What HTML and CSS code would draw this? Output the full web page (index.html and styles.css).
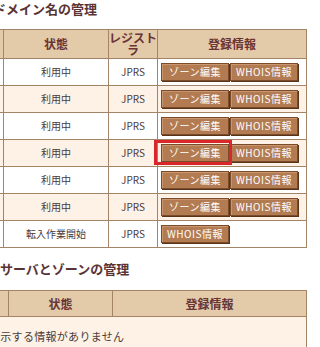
FILE: index.html
```html
<!DOCTYPE html>
<html lang="ja">
<head>
<meta charset="utf-8">
<title>ドメイン名の管理</title>
<link rel="stylesheet" href="styles.css">
</head>
<body>
<div class="page">
  <h2 class="title t1">ドメイン名の管理</h2>
  <table class="grid g1">
    <colgroup><col class="w-name"><col class="w-status"><col class="w-reg"><col class="w-info"></colgroup>
    <thead>
      <tr class="head"><th></th><th>状態</th><th>レジスト<br>ラ</th><th>登録情報</th></tr>
    </thead>
    <tbody>
      <tr><td></td><td class="c">利用中</td><td class="c reg">JPRS</td><td><div class="btns"><button class="btn">ゾーン編集</button><button class="btn">WHOIS情報</button></div></td></tr>
      <tr class="alt"><td></td><td class="c">利用中</td><td class="c reg">JPRS</td><td><div class="btns"><button class="btn">ゾーン編集</button><button class="btn">WHOIS情報</button></div></td></tr>
      <tr><td></td><td class="c">利用中</td><td class="c reg">JPRS</td><td><div class="btns"><button class="btn">ゾーン編集</button><button class="btn">WHOIS情報</button></div></td></tr>
      <tr class="alt"><td></td><td class="c">利用中</td><td class="c reg">JPRS</td><td><div class="btns"><button class="btn">ゾーン編集</button><button class="btn">WHOIS情報</button><span class="mark"></span></div></td></tr>
      <tr><td></td><td class="c">利用中</td><td class="c reg">JPRS</td><td><div class="btns"><button class="btn">ゾーン編集</button><button class="btn">WHOIS情報</button></div></td></tr>
      <tr class="alt"><td></td><td class="c">利用中</td><td class="c reg">JPRS</td><td><div class="btns"><button class="btn">ゾーン編集</button><button class="btn">WHOIS情報</button></div></td></tr>
      <tr><td></td><td class="c">転入作業開始</td><td class="c reg">JPRS</td><td><div class="btns"><button class="btn">WHOIS情報</button></div></td></tr>
    </tbody>
  </table>

  <h2 class="title t2">サーバとゾーンの管理</h2>
  <table class="grid g2">
    <colgroup><col class="w2-name"><col class="w2-status"><col class="w2-info"></colgroup>
    <thead>
      <tr class="head2"><th></th><th>状態</th><th>登録情報</th></tr>
    </thead>
    <tbody>
      <tr class="alt"><td colspan="3" class="empty">表示する情報がありません</td></tr>
    </tbody>
  </table>
</div>
</body>
</html>
```

FILE: styles.css
```css
* { box-sizing: border-box; }
html, body { margin: 0; padding: 0; background: #fff; }
body {
  font-family: "Noto Sans CJK JP", "Noto Sans", sans-serif;
  color: #4a3a3a;
  overflow: hidden;
  width: 315px;
  height: 347px;
}
.page { margin-left: -20px; width: 340px; }

.title {
  margin: 0;
  font-size: 13px;
  line-height: 16px;
  font-weight: bold;
  color: #5a3434;
}
.t1 { margin: 1px 0 12px 13px; }
.t2 { margin: 13px 0 13px 20px; }

.grid {
  border-collapse: separate;
  border-spacing: 0;
  table-layout: fixed;
  width: 327px;
  border-top: 1px solid #a38466;
  border-left: 1px solid #a38466;
}
.grid th, .grid td {
  border-right: 1px solid #a38466;
  border-bottom: 1px solid #a38466;
  padding: 0;
  vertical-align: middle;
}
.grid th {
  background: #e3cba9;
  color: #6a3535;
  font-size: 12px;
  line-height: 12px;
  font-weight: bold;
  text-align: center;
}
.w-name { width: 23px; }
.w-status { width: 105px; }
.w-reg { width: 49px; }
.w-info { width: 149px; }
.w2-name { width: 28px; }
.w2-status { width: 104px; }
.w2-info { width: 194px; }

.head { height: 29px; }
.head2 { height: 26px; }
.g1 tbody tr { height: 27px; }
.grid td { font-size: 10px; line-height: 12px; background: #fff; }
.grid tr.alt td { background: #fdf2e5; }
.c { text-align: center; }
.reg { color: #4a3a3a; }

.btns {
  position: relative;
  display: flex;
  gap: 1px;
  padding-left: 3px;
}
.btn {
  width: 68px;
  height: 18px;
  padding: 0;
  margin: 0;
  border: 1px solid #7b4c2c;
  background: #b27b52;
  box-shadow: inset 1px 1px 0 #c99670, 1px 1px 0 #5a3418;
  color: #fff;
  font-family: "Noto Sans CJK JP", "Noto Sans", sans-serif;
  font-size: 10px;
  line-height: 14px;
  letter-spacing: 0.5px;
  text-align: center;
}
.mark {
  position: absolute;
  left: -4px;
  top: -4px;
  width: 78px;
  height: 25px;
  border: 3px solid #d9262a;
}

.g2 td.empty {
  font-size: 11px;
  line-height: 14px;
  letter-spacing: 0.3px;
  padding: 12px 0 12px 8px;
  text-align: left;
  color: #4a3a3a;
}
```
